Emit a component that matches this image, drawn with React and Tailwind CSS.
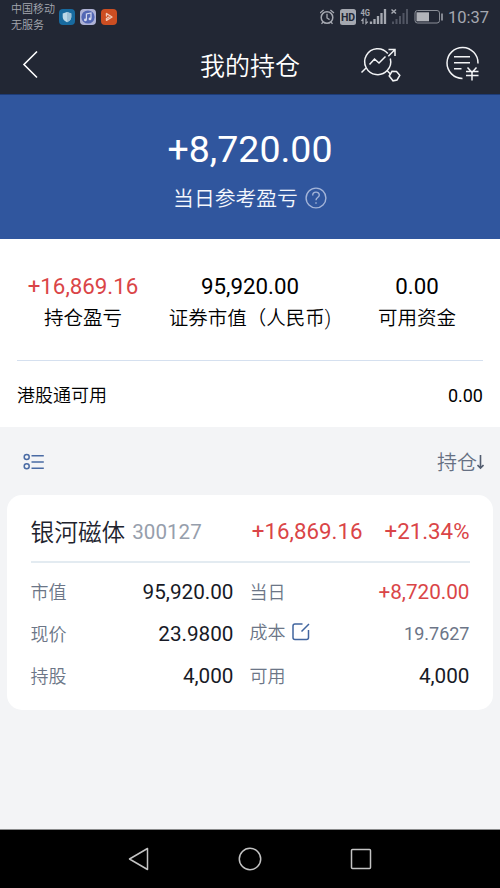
const RED = "text-[#da4547]";

function StatusBar() {
  return (
    <div className="flex h-[35px] items-start text-[#a5a8b0]">
      <div className="ml-[11px] w-[47.500px] pt-[2px] text-[11px] leading-[15.500px] font-[350] whitespace-nowrap">
        <div>中国移动</div>
        <div>无服务</div>
      </div>
      <div className="flex gap-[5px] pt-[9px]">
        <svg width="16" height="16" viewBox="0 0 16 16">
          <rect width="16" height="16" rx="4" fill="#186a9f" />
          <path d="M8 3 12.300 4.600V8c0 2.500-2 4.200-4.300 5.200C5.700 12.200 3.700 10.500 3.700 8V4.600Z" fill="#bcd8e8" />
          <path d="M8 3 12.300 4.600V8c0 2.500-2 4.200-4.300 5.200Z" fill="#9dc0d6" />
        </svg>
        <svg width="16" height="16" viewBox="0 0 16 16">
          <rect width="16" height="16" rx="4" fill="#aeb2d6" />
          <circle cx="8" cy="8" r="6.600" fill="#5367b4" />
          <path d="M6.400 10.700V5l4.600-1v5.600" fill="none" stroke="#d5d9ee" strokeWidth="1.200" />
          <circle cx="5.400" cy="10.900" r="1.400" fill="#d5d9ee" />
          <circle cx="10" cy="9.900" r="1.400" fill="#d5d9ee" />
        </svg>
        <svg width="16" height="16" viewBox="0 0 16 16">
          <rect width="16" height="16" rx="4" fill="#cc4e22" />
          <path d="M5.500 7V4.500L11 8l-5.500 3.300V9.500L8 8" fill="none" stroke="#f0c9b8" strokeWidth="1.400" strokeLinejoin="round" strokeLinecap="round" />
        </svg>
      </div>
      <svg className="ml-auto" width="129" height="35" viewBox="0 0 129 35" fill="none" stroke="#a5a8b0">
        <circle cx="7" cy="17.500" r="5.800" strokeWidth="1.500" />
        <path d="M7 13.800V18l2.600 1.600M0 13l3.600-3M14 13l-3.600-3M3 22l-1.500 1.800M11 22l1.500 1.800" strokeWidth="1.300" />
        <rect x="20" y="9" width="16" height="16" rx="2.500" fill="#a5a8b0" stroke="none" />
        <text x="28" y="21" textAnchor="middle" fill="#222734" stroke="none" fontSize="10.500" fontWeight="700">HD</text>
        <text x="40.500" y="15.500" fill="#a5a8b0" stroke="none" fontSize="8.500" fontWeight="700" textLength="9.500" lengthAdjust="spacingAndGlyphs">4G</text>
        <path d="M43 24v-5l-1.600 1.800M46 18.500v5l1.800-1.800" strokeWidth="1.200" />
        <path d="M51 24v-2.500M54.500 24v-5M58 24v-8M61.500 24V13M65 24V9" strokeWidth="2.300" />
        <path d="m71.500 9.500 4.500 4M76 9.500l-4.500 4" strokeWidth="1.500" />
        <path d="M73 24v-2.500M76.500 24v-5M80 24v-8M83.500 24V13M87 24V9" stroke="#505562" strokeWidth="2" />
        <rect x="95" y="10.500" width="24.500" height="12.500" rx="2.500" stroke="#8b8f98" strokeWidth="1" />
        <rect x="96.500" y="12.300" width="12.500" height="9" fill="#b2b4ba" stroke="none" />
        <path d="M122 13.500v7" strokeWidth="1.500" />
      </svg>
      <div className="mr-[11px] flex w-[40px] justify-end text-[16.500px] leading-[35px] whitespace-nowrap">10:37</div>
    </div>
  );
}

function TitleBar() {
  return (
    <div className="grid h-[60px] grid-cols-[150px_1fr_150px] items-center text-white">
      <svg className="ml-[20px]" width="20" height="30" viewBox="0 0 20 30" fill="none" stroke="currentColor" strokeWidth="1.600">
        <path d="M17 1.500 4 14.500 17 27.500" />
      </svg>
      <h1 className="pt-[3px] text-center text-[25px] leading-[57px] font-[350]">我的持仓</h1>
      <div className="flex items-center">
        <svg className="ml-[10px]" width="42" height="42" viewBox="360 44 42 42" fill="none" stroke="#f2f3f5" strokeWidth="1.500">
          <path d="M387.800 53.500A13 13 0 1 0 390.300 58.500M369.500 64.500l5-5.500 4.500 4 6.500-6.500M361.500 72.500l4.300-4.300M388.300 56.300l7-7M388.500 49.500h6.500v6.500M387 70.500l3.700 3.700" />
          <path d="m389.200 76 2.800-4.700 4.500.2 3.300 3.800-2.800 4.700-4 .8Z" />
        </svg>
        <svg className="ml-[43px]" width="38" height="42" viewBox="445 44 38 42" fill="none" stroke="#f2f3f5" strokeWidth="1.500">
          <path d="M478 63.500a15.500 15.500 0 1 0-15.500 15" />
          <path d="M454 56.700h16M454 62.700h16M454 68.700h7.500M467.500 67.500l4.500 5 4.500-5M466 71.500h12.500M466 75.500h12.500M472 72.500V80.500" />
        </svg>
      </div>
    </div>
  );
}

function Summary({ value, label, red }) {
  return (
    <div className="flex flex-col items-center whitespace-nowrap">
      <div className={`text-[22.300px] leading-[32px] ${red ? RED : ""}`}>{value}</div>
      <div className="pt-[1px] text-[19.500px] leading-[31px] font-[350]">{label}</div>
    </div>
  );
}

function Cell({ label, value, className = "text-[20.700px] text-[#171a26]", edit, shift = "" }) {
  return (
    <div className={`flex h-[42px] items-center justify-between ${shift}`}>
      <div className="flex items-center gap-[6px] pb-[2px] text-[18px] font-[350] text-[#6c7687]">
        <span>{label}</span>
        {edit && (
          <svg className="mb-[1px]" width="19" height="19" viewBox="0 0 19 19" fill="none" stroke="#41659f" strokeWidth="1.500">
            <path d="M10.500 2H3Q1 2 1 4v11.500q0 2 2 2h11.500q2 0 2-2V8M9.500 9.500l7.500-7.500" />
          </svg>
        )}
      </div>
      <span className={className}>{value}</span>
    </div>
  );
}

export default function App() {
  return (
    <div className="flex h-[888px] w-[500px] flex-col overflow-hidden bg-[#f3f4f6] font-[Roboto,'Noto_Sans_CJK_SC',sans-serif] text-black">
      <header className="h-[95px] shrink-0 border-b border-[#1d3c78] bg-[#222734]">
        <StatusBar />
        <TitleBar />
      </header>

      <section className="flex h-[144px] shrink-0 flex-col items-center bg-[#30569e] pt-[28px] text-white">
        <div className="text-[37.500px] leading-[52px]">+8,720.00</div>
        <div className="mt-[9px] flex items-center gap-[7px] text-[#f4f7fc]">
          <span className="text-[20.800px] leading-[30px] font-[350]">当日参考盈亏</span>
          <svg className="mb-[2px]" width="22" height="22" viewBox="0 0 22 22" fill="none" stroke="#a3b4d8" strokeWidth="1.400">
            <circle cx="11" cy="11" r="9.900" />
            <path d="M7.700 8.500C7.700 4 14.300 4.200 14.300 8c0 2.500-3.300 2.500-3.300 5.200M11 15.200v1.600" />
          </svg>
        </div>
      </section>

      <section className="h-[188px] shrink-0 bg-white px-[17px]">
        <div className="grid h-[122px] grid-cols-[132px_1fr_132px] border-b border-[#d5e0ef] pt-[31px]">
          <Summary value="+16,869.16" label="持仓盈亏" red />
          <Summary value="95,920.00" label="证券市值（人民币)" />
          <Summary value="0.00" label="可用资金" />
        </div>
        <div className="flex h-[68px] items-center justify-between text-[18px]">
          <span className="font-[350]">港股通可用</span>
          <span>0.00</span>
        </div>
      </section>

      <div className="flex h-[68px] shrink-0 items-center justify-between pt-[3px] pr-[16px] pl-[23px]">
        <svg className="mb-[1px]" width="22" height="18" viewBox="0 0 22 18" fill="none" stroke="#4a6ba4" strokeWidth="1.500">
          <circle cx="3.700" cy="4" r="2.500" />
          <circle cx="3.700" cy="13.300" r="2.500" />
          <path d="M8.500 2.700h12.300M8.500 9h12.300M8.500 15.300h12.300" />
        </svg>
        <div className="flex items-center text-[20px] text-[#667083]">
          <span className="font-[350]">持仓</span>
          <svg className="mb-[1px]" width="7" height="18" viewBox="0 0 7 18" fill="none" stroke="#535d70" strokeWidth="1.600">
            <path d="M3.500 2v13M.5 12l3 3 3-3" />
          </svg>
        </div>
      </div>

      <section className="mx-[7px] h-[215px] shrink-0 rounded-[15px] bg-white pr-[23.500px] pl-[23.500px]">
        <div className="flex h-[68px] items-center border-b-2 border-[#e3ebf1] pt-[8px] whitespace-nowrap">
          <span className="pt-[4px] text-[23.700px] font-[350] text-[#20222d]">银河磁体</span>
          <span className="ml-[7px] text-[20.600px] text-[#969eac]">300127</span>
          <span className={`ml-auto text-[22.300px] ${RED}`}>+16,869.16</span>
          <span className={`ml-[22px] text-[22.300px] ${RED}`}>+21.34%</span>
        </div>
        <div className="grid grid-cols-[203px_220px] gap-x-[16px] pt-[9px]">
          <Cell label="市值" value="95,920.00" />
          <Cell label="当日" value="+8,720.00" className="text-[20.700px] text-[#da4547]" />
          <Cell label="现价" value="23.9800" />
          <Cell label="成本" value="19.7627" className="text-[18px] text-[#6c7587]" edit shift="pb-[4px]" />
          <Cell label="持股" value="4,000" />
          <Cell label="可用" value="4,000" />
        </div>
      </section>

      <nav className="mt-auto flex h-[59px] shrink-0 items-center justify-center gap-[87px] border-t border-[#8a8b8c] bg-black">
        <svg width="24" height="26" viewBox="0 0 24 26" fill="none" stroke="#c3c3c3" strokeWidth="1.500" strokeLinejoin="round">
          <path d="M20.500 2.500v21L2.500 13Z" />
        </svg>
        <svg width="24" height="24" viewBox="0 0 24 24" fill="none" stroke="#c3c3c3" strokeWidth="1.500">
          <circle cx="12" cy="12" r="10.700" />
        </svg>
        <svg width="24" height="24" viewBox="0 0 24 24" fill="none" stroke="#c3c3c3" strokeWidth="1.500">
          <rect x="2.500" y="2.500" width="19" height="19" rx="1" />
        </svg>
      </nav>
    </div>
  );
}
